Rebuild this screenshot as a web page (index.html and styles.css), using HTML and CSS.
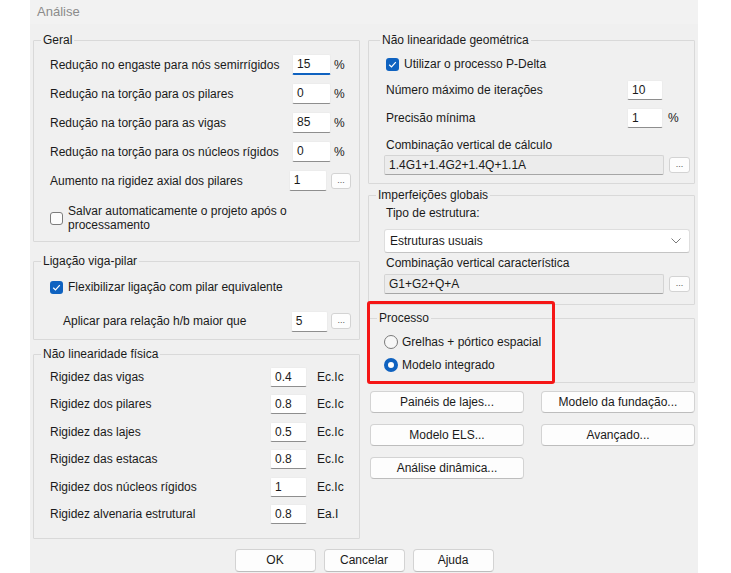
FILE: index.html
```html
<!DOCTYPE html>
<html lang="pt">
<head>
<meta charset="utf-8">
<title>Análise</title>
<link rel="stylesheet" href="styles.css">
</head>
<body>
<div class="dialog">
  <div class="titlebar">Análise</div>
  <div class="columns">
    <div class="col">
      <fieldset class="group geral">
        <legend>Geral</legend>
        <div class="row"><span class="lbl">Redução no engaste para nós semirrígidos</span><span class="input focus">15</span><span class="unit">%</span></div>
        <div class="row"><span class="lbl">Redução na torção para os pilares</span><span class="input">0</span><span class="unit">%</span></div>
        <div class="row"><span class="lbl">Redução na torção para as vigas</span><span class="input">85</span><span class="unit">%</span></div>
        <div class="row"><span class="lbl">Redução na torção para os núcleos rígidos</span><span class="input">0</span><span class="unit">%</span></div>
        <div class="row"><span class="lbl">Aumento na rigidez axial dos pilares</span><span class="input">1</span><span class="dots">...</span></div>
        <div class="check multi"><span class="box"></span><span class="ctext">Salvar automaticamente o projeto após o<br>processamento</span></div>
      </fieldset>

      <fieldset class="group ligacao">
        <legend>Ligação viga-pilar</legend>
        <div class="check"><span class="box on"><svg viewBox="0 0 13 13" width="13" height="13"><polyline points="3.2,6.8 5.5,9 9.8,4.2" fill="none" stroke="#fff" stroke-width="1.2"/></svg></span><span class="ctext">Flexibilizar ligação com pilar equivalente</span></div>
        <div class="row sub"><span class="lbl">Aplicar para relação h/b maior que</span><span class="input">5</span><span class="dots">...</span></div>
      </fieldset>

      <fieldset class="group fisica">
        <legend>Não linearidade física</legend>
        <div class="row"><span class="lbl">Rigidez das vigas</span><span class="input">0.4</span><span class="unit">Ec.Ic</span></div>
        <div class="row"><span class="lbl">Rigidez dos pilares</span><span class="input">0.8</span><span class="unit">Ec.Ic</span></div>
        <div class="row"><span class="lbl">Rigidez das lajes</span><span class="input">0.5</span><span class="unit">Ec.Ic</span></div>
        <div class="row"><span class="lbl">Rigidez das estacas</span><span class="input">0.8</span><span class="unit">Ec.Ic</span></div>
        <div class="row"><span class="lbl">Rigidez dos núcleos rígidos</span><span class="input">1</span><span class="unit">Ec.Ic</span></div>
        <div class="row"><span class="lbl">Rigidez alvenaria estrutural</span><span class="input">0.8</span><span class="unit">Ea.I</span></div>
      </fieldset>
    </div>

    <div class="col">
      <fieldset class="group geom">
        <legend>Não linearidade geométrica</legend>
        <div class="check"><span class="box on"><svg viewBox="0 0 13 13" width="13" height="13"><polyline points="3.2,6.8 5.5,9 9.8,4.2" fill="none" stroke="#fff" stroke-width="1.2"/></svg></span><span class="ctext">Utilizar o processo P-Delta</span></div>
        <div class="row first"><span class="lbl">Número máximo de iterações</span><span class="input">10</span></div>
        <div class="row"><span class="lbl">Precisão mínima</span><span class="input">1</span><span class="unit">%</span></div>
        <div class="caption">Combinação vertical de cálculo</div>
        <div class="fieldrow"><span class="ro">1.4G1+1.4G2+1.4Q+1.1A</span><span class="dots">...</span></div>
      </fieldset>

      <fieldset class="group imperf">
        <legend>Imperfeições globais</legend>
        <div class="caption top">Tipo de estrutura:</div>
        <div class="select"><span>Estruturas usuais</span><svg class="chev" viewBox="0 0 10 6" width="10" height="6"><polyline points="0.5,0.5 5,5 9.5,0.5" fill="none" stroke="#7a7a7a" stroke-width="1"/></svg></div>
        <div class="caption">Combinação vertical característica</div>
        <div class="fieldrow"><span class="ro">G1+G2+Q+A</span><span class="dots">...</span></div>
      </fieldset>

      <div class="processo-wrap">
        <fieldset class="group processo">
          <legend>Processo</legend>
          <div class="radio"><span class="circle"></span><span>Grelhas + pórtico espacial</span></div>
          <div class="radio"><span class="circle on"></span><span>Modelo integrado</span></div>
        </fieldset>
        <span class="annot"></span>
      </div>

      <div class="btngrid">
        <div class="btn">Painéis de lajes...</div>
        <div class="btn">Modelo da fundação...</div>
        <div class="btn">Modelo ELS...</div>
        <div class="btn">Avançado...</div>
        <div class="btn">Análise dinâmica...</div>
      </div>
    </div>
  </div>

  <div class="footer">
    <div class="btn fbtn">OK</div>
    <div class="btn fbtn">Cancelar</div>
    <div class="btn fbtn">Ajuda</div>
  </div>
</div>
</body>
</html>
```

FILE: styles.css
```css
* { box-sizing: border-box; }

body {
  margin: 0;
  background: #ffffff;
  font-family: "Liberation Sans", Arial, sans-serif;
  font-size: 12px;
  color: #1a1a1a;
}

.dialog {
  margin-left: 30px;
  width: 668px;
  height: 573px;
  background: #f0f0f0;
  overflow: hidden;
}

.titlebar {
  height: 24px;
  line-height: 24px;
  padding-left: 7px;
  font-size: 13px;
  color: #8b8b8b;
  background: #f2f2f2;
}

.columns {
  display: flex;
  align-items: flex-start;
  gap: 8px;
  padding: 8px 0 0 3px;
}

.col {
  flex: none;
  width: 327px;
  display: block;
}

.group {
  display: block;
  margin: 0;
  min-width: 0;
  border: 1px solid #d9d9d9;
  border-radius: 1px;
}

.group legend {
  padding: 0 2px;
  line-height: 16px;
  height: 16px;
}

.row {
  display: flex;
  align-items: center;
  height: 29px;
  white-space: nowrap;
}

.input {
  display: block;
  height: 21px;
  background: #ffffff;
  border: 1px solid #ececec;
  border-bottom: 1px solid #8e8e8e;
  border-radius: 2px;
  padding-left: 4px;
  line-height: 19px;
}

.input.focus {
  border-bottom: 2px solid #0f62c0;
}

.unit { margin-left: 3px; }

.dots {
  display: block;
  width: 20px;
  height: 16px;
  margin-left: 4px;
  background: #fdfdfd;
  border: 1px solid #d3d3d3;
  border-radius: 3px;
  font-size: 9px;
  line-height: 12px;
  text-align: center;
  color: #555;
}

.check {
  display: flex;
  align-items: center;
  height: 22px;
  white-space: nowrap;
}

.box {
  flex: none;
  width: 13px;
  height: 13px;
  margin-right: 5px;
  border: 1px solid #7c7c7c;
  border-radius: 3px;
  background: #fcfcfc;
}

.box.on {
  border: none;
  background: #0f62c0;
}

.box svg { display: block; }

.check.multi {
  height: auto;
  margin-top: 9px;
  line-height: 14px;
  white-space: normal;
}

/* Geral */
.geral { padding: 2px 8px 9px 16px; }
.geral legend { margin-left: -9px; }
.geral .lbl { width: 242px; }
.geral .input { width: 39px; }
.geral .dots { margin-left: 4px; }

/* Ligação */
.group.ligacao { margin-top: 11px; padding: 7px 8px 6px 16px; }
.ligacao legend { margin-left: -9px; }
.ligacao .sub { margin-top: 11px; height: 24px; padding-left: 13px; }
.ligacao .sub .lbl { width: 231px; }
.ligacao .input { width: 38px; }
.ligacao .dots { margin-left: 3px; }

/* Física */
.group.fisica { margin-top: 6px; padding: 1px 8px 10px 16px; }
.fisica legend { margin-left: -9px; }
.fisica .row { height: 27.5px; }
.fisica .lbl { width: 220px; }
.fisica .input { width: 37px; height: 20px; }
.fisica .unit { margin-left: 10px; }

/* Geométrica */
.geom { padding: 5px 4px 8px 17px; }
.geom legend { margin-left: -6px; }
.geom .row { height: 28px; }
.geom .row.first { margin-top: 1px; }
.geom .lbl { width: 241px; }
.geom .input { width: 36px; height: 20px; }
.geom .unit { margin-left: 5px; }

.caption {
  line-height: 16px;
  margin-top: 5px;
  white-space: nowrap;
}

.fieldrow {
  display: flex;
  align-items: center;
  margin-top: 2px;
  margin-left: -2px;
}

.ro {
  display: block;
  width: 280px;
  height: 20px;
  padding-left: 4px;
  line-height: 18px;
  background: #ececec;
  border: 1px solid #d4d4d4;
  border-bottom-color: #a6a6a6;
  border-radius: 2px;
}

.fieldrow .dots { margin-left: 5px; width: 21px; }

/* Imperfeições */
.group.imperf { margin-top: 3px; padding: 2px 4px 10px 17px; }
.imperf legend { margin-left: -10px; }
.imperf .caption.top { margin-top: 0; }
.imperf .caption { margin-top: 2px; }
.imperf .fieldrow { margin-top: 3px; }

.select {
  display: flex;
  align-items: center;
  justify-content: space-between;
  margin-top: 8px;
  margin-left: -2px;
  width: 306px;
  height: 24px;
  padding: 0 8px 0 5px;
  background: #ffffff;
  border: 1px solid #dedede;
  border-bottom-color: #c4c4c4;
  border-radius: 3px;
}

.chev { display: block; }

/* Processo */
.processo-wrap {
  position: relative;
  margin-top: 5px;
}

.processo { padding: 4px 4px 6px 15px; }
.processo legend { margin-left: -7px; }

.radio {
  display: flex;
  align-items: center;
  height: 23px;
  white-space: nowrap;
}

.circle {
  flex: none;
  width: 14px;
  height: 14px;
  margin-right: 4px;
  border-radius: 50%;
  border: 1px solid #7a7a7a;
  background: #f7f7f7;
}

.circle.on {
  border: 4px solid #0f62c0;
  background: #ffffff;
}

.annot {
  position: absolute;
  left: -1px;
  top: -9px;
  width: 188px;
  height: 83px;
  border: 3px solid #f51616;
  border-radius: 3px;
}

/* Buttons */
.btngrid {
  display: grid;
  grid-template-columns: 154px 154px;
  column-gap: 17px;
  row-gap: 11px;
  margin-top: 8px;
  margin-left: 2px;
}

.btn {
  height: 22px;
  line-height: 20px;
  text-align: center;
  background: #fdfdfd;
  border: 1px solid #d3d3d3;
  border-bottom-color: #bdbdbd;
  border-radius: 4px;
  white-space: nowrap;
}

.footer {
  display: flex;
  justify-content: center;
  gap: 8px;
  margin-top: 10px;
}

.fbtn {
  width: 81px;
  height: 23px;
  line-height: 21px;
}
```
